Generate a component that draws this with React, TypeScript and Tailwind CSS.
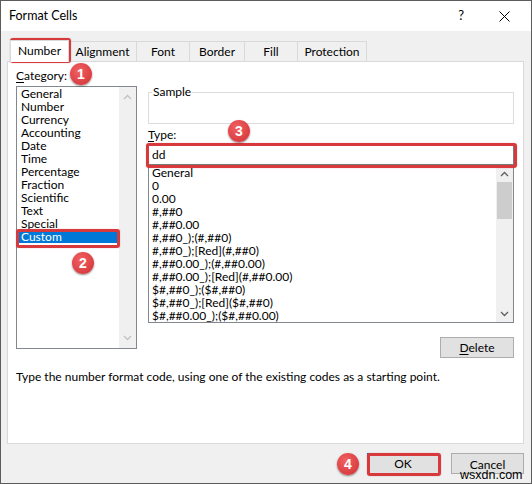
import React from "react";

const categories = [
  "General",
  "Number",
  "Currency",
  "Accounting",
  "Date",
  "Time",
  "Percentage",
  "Fraction",
  "Scientific",
  "Text",
  "Special",
  "Custom",
];

const formats = [
  "General",
  "0",
  "0.00",
  "#,##0",
  "#,##0.00",
  "#,##0_);(#,##0)",
  "#,##0_);[Red](#,##0)",
  "#,##0.00_);(#,##0.00)",
  "#,##0.00_);[Red](#,##0.00)",
  "$#,##0_);($#,##0)",
  "$#,##0_);[Red]($#,##0)",
  "$#,##0.00_);($#,##0.00)",
];

const tabs = [
  { label: "Number", w: "w-[59px]" },
  { label: "Alignment", w: "w-[68px]" },
  { label: "Font", w: "w-[53px]" },
  { label: "Border", w: "w-[55px]" },
  { label: "Fill", w: "w-[53px]" },
  { label: "Protection", w: "w-[69px]" },
];

function Chevron({ up, color }: { up: boolean; color: string }) {
  return (
    <svg width="9" height="6" viewBox="0 0 9 6">
      <polyline
        points={up ? "1,5 4.5,1.5 8,5" : "1,1 4.5,4.5 8,1"}
        fill="none"
        stroke={color}
        strokeWidth="1.3"
      />
    </svg>
  );
}

function Badge({ n, pos }: { n: string; pos: string }) {
  return (
    <div
      className={`absolute ${pos} w-[22px] h-[22px] rounded-full bg-[radial-gradient(circle_at_40%_35%,#f26161,#cf2f35)] shadow-[0_1px_2px_rgba(0,0,0,0.45)] flex items-center justify-center text-white font-bold text-[14px] leading-none font-['Liberation_Sans',sans-serif]`}
    >
      {n}
    </div>
  );
}

function RedBox({ pos }: { pos: string }) {
  return (
    <div
      className={`absolute ${pos} border-[3px] border-[#d8393d] rounded-[3px] shadow-[0_0_1px_rgba(120,0,0,0.5)] pointer-events-none`}
    />
  );
}

export default function App() {
  return (
    <div className="relative w-[532px] h-[484px] border border-[#5c5c5c] bg-[#f0f0f0] flex flex-col text-[12px] text-black font-['Lato',sans-serif] overflow-hidden">
      {/* Title bar */}
      <div className="h-[30px] bg-white flex items-center pl-[8px] shrink-0">
        <span className="text-[12.5px]">Format Cells</span>
        <span className="ml-auto text-[13px] mr-[35px]">?</span>
        <svg width="11" height="11" viewBox="0 0 11 11" className="mr-[21px]">
          <line x1="0.5" y1="0.5" x2="10.5" y2="10.5" stroke="#000" strokeWidth="1" />
          <line x1="10.5" y1="0.5" x2="0.5" y2="10.5" stroke="#000" strokeWidth="1" />
        </svg>
      </div>

      {/* Tabs */}
      <div className="h-[30px] flex items-end pl-[9px] shrink-0">
        {tabs.map((t, i) =>
          i === 0 ? (
            <div
              key={t.label}
              className={`${t.w} h-[22px] bg-white border-l border-t border-r border-[#d9d9d9] flex items-center justify-center relative z-10 -mb-px pb-[1px]`}
            >
              {t.label}
            </div>
          ) : (
            <div
              key={t.label}
              className={`${t.w} h-[20px] bg-[#f0f0f0] border-t border-r border-[#d9d9d9] flex items-center justify-center`}
            >
              {t.label}
            </div>
          )
        )}
      </div>

      {/* Panel */}
      <div className="ml-[6px] w-[517px] h-[383px] bg-white border border-[#d9d9d9] shrink-0 flex flex-col">
        <div className="flex pl-[8px]">
          {/* Left column */}
          <div className="w-[121px] pt-[7px] flex flex-col">
            <div className="leading-[14px] h-[14px]">
              <span className="underline underline-offset-2">C</span>ategory:
            </div>
            <div className="mt-[3px] h-[263px] border border-[#828790] flex">
              <div className="flex-1 flex flex-col pl-[1px]">
                {categories.map((c) =>
                  c === "Custom" ? (
                    <div key={c} className="h-[13px] leading-[13px] bg-[#0078d7] text-white pl-[3px] mr-[2px]">
                      {c}
                    </div>
                  ) : (
                    <div key={c} className="h-[13px] leading-[13px] pl-[3px]">
                      {c}
                    </div>
                  )
                )}
              </div>
              <div className="w-[17px] bg-[#f0f0f0] flex flex-col items-center justify-between py-[7px]">
                <Chevron up color="#c2c2c2" />
                <Chevron up={false} color="#c2c2c2" />
              </div>
            </div>
          </div>

          {/* Right column */}
          <div className="ml-[11px] w-[366px] pt-[30px] flex flex-col">
            <div className="relative h-[32px] border border-[#dcdcdc]">
              <span className="absolute -top-[8px] left-[3px] bg-white px-[1px] leading-[14px]">Sample</span>
            </div>
            <div className="mt-[4px] h-[14px] leading-[14px]">
              <span className="underline underline-offset-2">T</span>ype:
            </div>
            <div className="mt-[2px] h-[21px] border border-[#7a7a7a] flex items-center pl-[3px]">dd</div>
            <div className="h-[158px] border border-[#828790] border-t-0 flex">
              <div className="flex-1 flex flex-col pl-[3px] pt-[1px]">
                {formats.map((f) => (
                  <div key={f} className="h-[13px] leading-[13px] whitespace-nowrap shrink-0">
                    {f}
                  </div>
                ))}
              </div>
              <div className="w-[17px] bg-[#f0f0f0] flex flex-col items-center">
                <div className="h-[17px] flex items-center justify-center">
                  <Chevron up color="#606060" />
                </div>
                <div className="w-[15px] h-[37px] bg-[#cdcdcd]" />
                <div className="flex-1" />
                <div className="h-[17px] flex items-center justify-center">
                  <Chevron up={false} color="#606060" />
                </div>
              </div>
            </div>
            <div className="mt-[14px] self-end w-[74px] h-[21px] bg-[#e1e1e1] border border-[#adadad] flex items-center justify-center">
              <span>
                <span className="underline underline-offset-2">D</span>elete
              </span>
            </div>
          </div>
        </div>
        <div className="mt-[12px] pl-[8px] leading-[14px]">
          Type the number format code, using one of the existing codes as a starting point.
        </div>
      </div>

      {/* Buttons */}
      <div className="mt-[9px] flex justify-end pr-[7px] gap-[12px]">
        <div className="w-[72px] h-[21px] bg-[#e1e1e1] border border-[#0078d7] flex items-center justify-center">OK</div>
        <div className="w-[73px] h-[21px] bg-[#e1e1e1] border border-[#adadad] flex items-start justify-center pt-[2px]">Cancel</div>
      </div>

      {/* Annotations */}
      <RedBox pos="left-[9px] top-[37px] w-[61px] h-[25px]" />
      <RedBox pos="left-[15px] top-[228px] w-[104px] h-[19px]" />
      <RedBox pos="left-[145px] top-[142px] w-[371px] h-[25px]" />
      <RedBox pos="left-[366px] top-[452px] w-[74px] h-[23px]" />
      <Badge n="1" pos="left-[69px] top-[62px]" />
      <Badge n="2" pos="left-[71px] top-[251px]" />
      <Badge n="3" pos="left-[227px] top-[119px]" />
      <Badge n="4" pos="left-[336px] top-[452px]" />

      <div className="absolute left-[459px] top-[468px] text-[12.5px] leading-[12px] font-['Liberation_Sans',sans-serif] text-black">
        wsxdn.com
      </div>
    </div>
  );
}
